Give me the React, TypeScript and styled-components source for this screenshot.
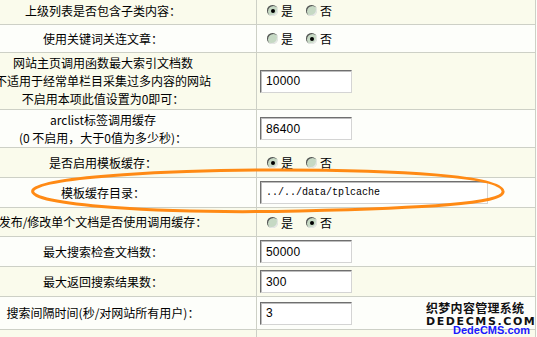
import React from "react";
import styled, { createGlobalStyle, css } from "styled-components";

const GlobalStyle = createGlobalStyle`
  html, body {
    margin: 0;
    padding: 0;
    background: #fdfefa;
    overflow: hidden;
  }
  body {
    width: 537px;
    height: 337px;
    font-family: "Noto Sans CJK SC", "Liberation Sans", sans-serif;
    font-size: 12px;
    color: #000;
  }
`;

const Page = styled.div`
  position: relative;
  width: 537px;
  height: 337px;
  overflow: hidden;
`;

const Table = styled.table`
  width: 586px;
  margin: -3px 0 0 -50px;
  border-collapse: separate;
  border-spacing: 0;
  table-layout: fixed;
  border-right: 1px solid #cdd0c6;
`;

const Row = styled.tr<{ $alt?: boolean }>`
  background: ${(p) => (p.$alt ? "#fafbec" : "#fdfefa")};
`;

const LabelCell = styled.td<{ $h: number }>`
  box-sizing: border-box;
  width: 307px;
  height: ${(p) => p.$h}px;
  padding: 0;
  text-align: center;
  vertical-align: middle;
  line-height: 18px;
  white-space: nowrap;
  border-right: 1px solid #cdd0c6;
  border-bottom: 1px solid #cdd0c6;
`;

const ValueCell = styled.td<{ $h: number }>`
  box-sizing: border-box;
  height: ${(p) => p.$h}px;
  padding: 0 0 0 3px;
  vertical-align: middle;
  border-bottom: 1px solid #cdd0c6;
`;

const TextInput = styled.div<{ $wide?: boolean }>`
  box-sizing: border-box;
  width: ${(p) => (p.$wide ? 228 : 92)}px;
  height: 23px;
  padding: 0 0 0 5px;
  display: flex;
  align-items: center;
  background: #fff;
  border: 1px solid;
  border-color: #6f6f6f #d4d4d4 #d4d4d4 #6f6f6f;
  box-shadow: inset 1px 1px 0 #bdbdbd;
  font-family: ${(p) =>
    p.$wide ? '"Liberation Mono", monospace' : '"Liberation Sans", sans-serif'};
  font-size: ${(p) => (p.$wide ? 10 : 12)}px;
  letter-spacing: ${(p) => (p.$wide ? "0" : "0.2px")};
`;

const RadioGroup = styled.div`
  display: flex;
  align-items: center;
  padding-left: 7px;
`;

const Option = styled.label`
  display: flex;
  align-items: center;
  margin-right: 13px;
`;

const RadioDot = styled.span<{ $on?: boolean }>`
  position: relative;
  display: inline-block;
  width: 11px;
  height: 11px;
  margin-right: 3px;
  border-radius: 50%;
  background: #c6d9c4;
  box-shadow: inset 1px 1px 0 #555, inset -1px -1px 0 #e6e6e6;
  ${(p) =>
    p.$on &&
    css`
      &::after {
        content: "";
        position: absolute;
        left: 4px;
        top: 4px;
        width: 4px;
        height: 4px;
        border-radius: 50%;
        background: #000;
      }
    `}
`;

const Ellipse = styled.svg`
  position: absolute;
  left: 0;
  top: 0;
  pointer-events: none;
`;

const Watermark = styled.div`
  position: absolute;
  left: 426px;
  top: 300px;
  width: 111px;
  height: 37px;
  pointer-events: none;
`;

const MarkTitle = styled.div`
  font-family: "Noto Sans CJK SC", sans-serif;
  font-weight: 700;
  font-size: 12px;
  line-height: 15px;
  letter-spacing: 0.3px;
  color: #111;
  text-shadow: 1px 0 0 #fff, -1px 0 0 #fff, 0 1px 0 #fff, 0 -1px 0 #fff;
`;

const MarkDomain = styled.div`
  position: relative;
  font-family: "DejaVu Sans", sans-serif;
  font-weight: 700;
  font-size: 11px;
  line-height: 13px;
  letter-spacing: 1.6px;
  color: #111;
  text-shadow: 1px 0 0 #fff, -1px 0 0 #fff, 0 1px 0 #fff, 0 -1px 0 #fff;
  z-index: 1;
`;

const MarkBlue = styled.div`
  position: absolute;
  left: 27px;
  top: 24px;
  font-family: "Liberation Sans", sans-serif;
  font-weight: 700;
  font-size: 11px;
  line-height: 13px;
  white-space: nowrap;
  color: #1a1aff;
`;

type Field =
  | { label: React.ReactNode; h: number; kind: "radio"; on: boolean }
  | { label: React.ReactNode; h: number; kind: "text"; value: string; wide?: boolean };

const fields: Field[] = [
  { label: "上级列表是否包含子类内容：", h: 28, kind: "radio", on: true },
  { label: "使用关键词关连文章：", h: 28, kind: "radio", on: false },
  {
    label: (
      <>
        网站主页调用函数最大索引文档数
        <br />
        不适用于经常单栏目采集过多内容的网站
        <br />
        不启用本项此值设置为0即可：
      </>
    ),
    h: 57,
    kind: "text",
    value: "10000",
  },
  {
    label: (
      <>
        arclist标签调用缓存
        <br />
        (0 不启用，大于0值为多少秒)：
      </>
    ),
    h: 38,
    kind: "text",
    value: "86400",
  },
  { label: "是否启用模板缓存：", h: 30, kind: "radio", on: true },
  { label: "模板缓存目录：", h: 30, kind: "text", value: "../../data/tplcache", wide: true },
  { label: "发布/修改单个文档是否使用调用缓存：", h: 29, kind: "radio", on: false },
  { label: "最大搜索检查文档数：", h: 30, kind: "text", value: "50000" },
  { label: "最大返回搜索结果数：", h: 30, kind: "text", value: "300" },
  { label: "搜索间隔时间(秒/对网站所有用户)：", h: 33, kind: "text", value: "3" },
  { label: "", h: 30, kind: "text", value: "" },
];

function YesNo({ on }: { on: boolean }) {
  return (
    <RadioGroup>
      <Option>
        <RadioDot $on={on} />是
      </Option>
      <Option>
        <RadioDot $on={!on} />否
      </Option>
    </RadioGroup>
  );
}

export default function App() {
  return (
    <Page>
      <GlobalStyle />
      <Table>
        <tbody>
          {fields.map((f, i) => (
            <Row key={i} $alt={i % 2 === 0}>
              <LabelCell $h={f.h}>{f.label}</LabelCell>
              <ValueCell $h={f.h}>
                {i === fields.length - 1 ? null : f.kind === "radio" ? (
                  <YesNo on={f.on} />
                ) : (
                  <TextInput $wide={f.wide}>{f.value}</TextInput>
                )}
              </ValueCell>
            </Row>
          ))}
        </tbody>
      </Table>
      <Ellipse width="537" height="337" viewBox="0 0 537 337">
        <path
          d="M 33 190 C 45 176, 180 170, 280 170 C 400 170, 500 176, 503 191 C 506 204, 420 208, 300 211 C 160 214, 25 205, 33 190 Z"
          fill="none"
          stroke="#ff8a14"
          strokeWidth="3"
        />
      </Ellipse>
      <Watermark>
        <MarkTitle>织梦内容管理系统</MarkTitle>
        <MarkBlue>DedeCMS.com</MarkBlue>
        <MarkDomain>DEDECMS.COM</MarkDomain>
      </Watermark>
    </Page>
  );
}
